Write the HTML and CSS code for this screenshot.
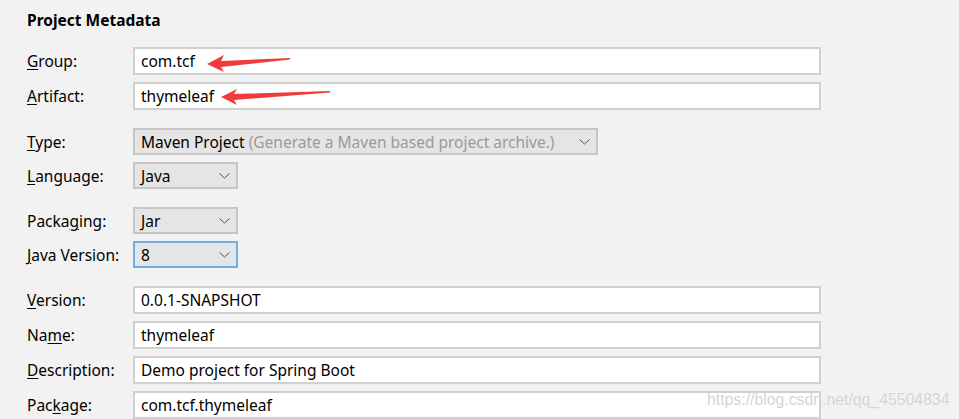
FILE: index.html
```html
<!DOCTYPE html>
<html>
<head>
<meta charset="utf-8">
<link rel="stylesheet" href="styles.css">
</head>
<body>
<div class="page">
  <div class="title">Project Metadata</div>
  <div class="form">
    <div class="section">
      <div class="row"><label class="lbl"><u>G</u>roup:</label><div class="field">com.tcf</div></div>
      <div class="row"><label class="lbl"><u>A</u>rtifact:</label><div class="field">thymeleaf</div></div>
    </div>
    <div class="section">
      <div class="row drow"><label class="lbl"><u>T</u>ype:</label><div class="combo wide"><span>Maven Project <span class="hint">(Generate a Maven based project archive.)</span></span><span class="chev"><svg width="11" height="6" viewBox="0 0 11 6"><path d="M0.5 0.5 L5.5 5 L10.5 0.5" fill="none" stroke="#555" stroke-width="1"/></svg></span></div></div>
      <div class="row drow"><label class="lbl"><u>L</u>anguage:</label><div class="combo"><span>Java</span><span class="chev"><svg width="11" height="6" viewBox="0 0 11 6"><path d="M0.5 0.5 L5.5 5 L10.5 0.5" fill="none" stroke="#555" stroke-width="1"/></svg></span></div></div>
    </div>
    <div class="section">
      <div class="row drow"><label class="lbl">Packa<u>g</u>ing:</label><div class="combo"><span>Jar</span><span class="chev"><svg width="11" height="6" viewBox="0 0 11 6"><path d="M0.5 0.5 L5.5 5 L10.5 0.5" fill="none" stroke="#555" stroke-width="1"/></svg></span></div></div>
      <div class="row drow"><label class="lbl"><u>J</u>ava Version:</label><div class="combo focus"><span>8</span><span class="chev"><svg width="11" height="6" viewBox="0 0 11 6"><path d="M0.5 0.5 L5.5 5 L10.5 0.5" fill="none" stroke="#555" stroke-width="1"/></svg></span></div></div>
    </div>
    <div class="section">
      <div class="row"><label class="lbl"><u>V</u>ersion:</label><div class="field">0.0.1-SNAPSHOT</div></div>
      <div class="row"><label class="lbl">Na<u>m</u>e:</label><div class="field">thymeleaf</div></div>
      <div class="row"><label class="lbl"><u>D</u>escription:</label><div class="field">Demo project for Spring Boot</div></div>
      <div class="row"><label class="lbl">Pac<u>k</u>age:</label><div class="field">com.tcf.thymeleaf</div></div>
    </div>
  </div>
  <svg class="arrows" width="959" height="419" viewBox="0 0 959 419">
    <polygon points="207,64 224,55 221,61 290,58 290,59.5 221,67 224,72" fill="#ef3b3b"/>
    <polygon points="221,97 237,89 234,94 330,91 330,92.5 234,100 237,105" fill="#ef3b3b"/>
  </svg>
  <div class="watermark">https://blog.csdn.net/qq_45504834</div>
</div>
</body>
</html>
```
FILE: styles.css
```css
html, body {
  margin: 0;
  padding: 0;
  background: #f2f2f2;
}
body {
  width: 959px;
  height: 419px;
  overflow: hidden;
  font-family: "Noto Sans", "Open Sans", sans-serif;
  font-size: 15.5px;
  color: #000;
}
.page {
  position: relative;
  width: 959px;
  height: 419px;
}
.title {
  font-weight: bold;
  padding: 9px 0 0 27px;
  height: 23px;
  line-height: 23px;
}
.form {
  display: flex;
  flex-direction: column;
  gap: 18px;
  padding: 15px 0 0 27px;
}
.section {
  display: flex;
  flex-direction: column;
  gap: 7px;
}
.row {
  display: flex;
  align-items: center;
  height: 28px;
}
.row.drow {
  height: 27px;
}
.lbl {
  width: 106px;
  flex: none;
}
.lbl u {
  text-decoration-thickness: 1px;
  text-underline-offset: 2px;
}
.field {
  box-sizing: border-box;
  width: 688px;
  height: 28px;
  background: #fff;
  border: 2px solid #d0d0d0;
  padding: 0 0 0 6px;
  line-height: 24px;
  white-space: nowrap;
}
.combo {
  box-sizing: border-box;
  width: 105px;
  height: 27px;
  background: #e5e5e5;
  border: 2px solid #c6c6c6;
  padding: 0 6px 0 6px;
  display: flex;
  align-items: center;
  justify-content: space-between;
  white-space: nowrap;
}
.combo.wide {
  width: 465px;
}
.combo.focus {
  border-color: #72aee6;
}
.hint {
  color: #9a9a9a;
}
.chev {
  display: flex;
  align-items: center;
  padding-top: 1px;
}
.arrows {
  position: absolute;
  left: 0;
  top: 0;
  pointer-events: none;
}
.watermark {
  position: absolute;
  left: 707px;
  top: 391px;
  font-family: "Liberation Sans", Arial, sans-serif;
  font-size: 15.8px;
  color: rgba(205, 205, 205, 0.85);
  text-shadow: 0 0 1px rgba(255,255,255,0.6);
  white-space: nowrap;
}
```
